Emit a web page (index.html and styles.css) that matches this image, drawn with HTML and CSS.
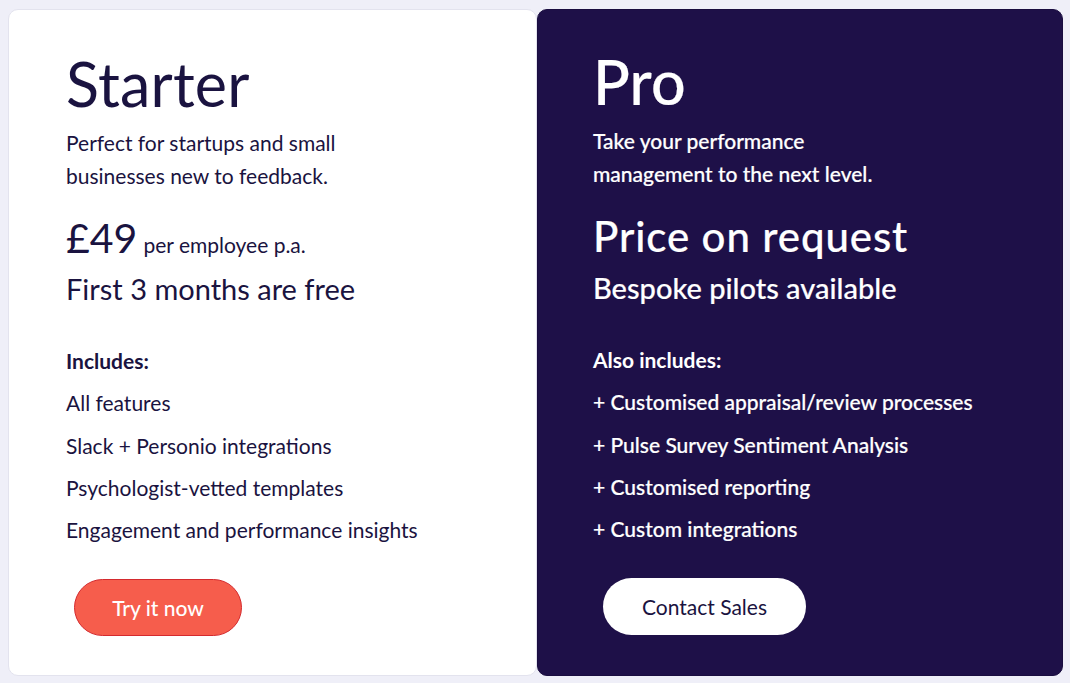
FILE: index.html
```html
<!DOCTYPE html>
<html lang="en">
<head>
<meta charset="utf-8">
<title>Pricing</title>
<link rel="stylesheet" href="styles.css">
</head>
<body>
<main class="plans">
  <section class="card card-starter">
    <h2 class="plan-name">Starter</h2>
    <p class="plan-desc">Perfect for startups and small<br>businesses new to feedback.</p>
    <div class="price"><span class="price-big">£49</span> <span class="price-unit">per employee p.a.</span></div>
    <div class="price-sub">First 3 months are free</div>
    <div class="features">
      <div class="features-title">Includes:</div>
      <div class="feature">All features</div>
      <div class="feature">Slack + Personio integrations</div>
      <div class="feature">Psychologist-vetted templates</div>
      <div class="feature">Engagement and performance insights</div>
    </div>
    <a class="btn btn-try" href="#">Try it now</a>
  </section>
  <section class="card card-pro">
    <h2 class="plan-name">Pro</h2>
    <p class="plan-desc">Take your performance<br>management to the next level.</p>
    <div class="price"><span class="price-big price-request">Price on request</span></div>
    <div class="price-sub">Bespoke pilots available</div>
    <div class="features">
      <div class="features-title">Also includes:</div>
      <div class="feature">+ Customised appraisal/review processes</div>
      <div class="feature">+ Pulse Survey Sentiment Analysis</div>
      <div class="feature">+ Customised reporting</div>
      <div class="feature">+ Custom integrations</div>
    </div>
    <a class="btn btn-contact" href="#">Contact Sales</a>
  </section>
</main>
</body>
</html>
```

FILE: styles.css
```css
* { box-sizing: border-box; }
html, body { margin: 0; padding: 0; }
body {
  background: #efeff8;
  font-family: Lato, "Open Sans", "Liberation Sans", sans-serif;
  color: #1a1340;
  width: 1070px;
  height: 683px;
  overflow: hidden;
}
.plans {
  display: flex;
  padding: 9px 7px 7px 8px;
  height: 683px;
}
.card {
  display: flex;
  flex-direction: column;
  align-items: flex-start;
  height: 667px;
  border-radius: 10px;
  padding: 38px 0 0 57px;
}
.card-starter {
  width: 529px;
  background: #ffffff;
  border: 1px solid #e3e3ee;
}
.card-pro {
  width: 526px;
  background: #1e1048;
  color: #ffffff;
  padding-top: 36px;
  padding-left: 55px;
  border: 1px solid #1a0d40;
}
.plan-name {
  margin: 0;
  font-size: 61px;
  line-height: 72px;
  font-weight: 400;
  letter-spacing: 0.2px;
}
.plan-desc {
  margin: 6px 0 0;
  font-size: 21px;
  line-height: 33px;
}
.price {
  margin-top: 22px;
  line-height: 48px;
  white-space: nowrap;
}
.price-big { font-size: 41px; }
.price-request { font-size: 42px; letter-spacing: 0.9px; }
.price-unit { font-size: 21px; margin-left: 2px; }
.price-sub {
  margin-top: 0;
  font-size: 29px;
  line-height: 36px;
}
.features {
  margin-top: 33px;
  font-size: 21px;
  line-height: 42.3px;
}
.features-title { font-weight: 700; }
.card-pro .plan-desc,
.card-pro .price,
.card-pro .price-sub,
.card-pro .feature,
.card-pro .plan-name {
  font-weight: 500;
  -webkit-text-stroke: 0.2px #ffffff;
}
.btn {
  display: flex;
  align-items: center;
  justify-content: center;
  height: 57px;
  margin-top: 28px;
  margin-left: 8px;
  border-radius: 29px;
  font-size: 21px;
  text-decoration: none;
}
.btn-try {
  width: 168px;
  background: #f65d4c;
  border: 1px solid #d42a2e;
  color: #ffffff;
  font-weight: 500;
}
.btn-contact {
  width: 203px;
  margin-left: 10px;
  background: #ffffff;
  color: #1a1340;
}
```
